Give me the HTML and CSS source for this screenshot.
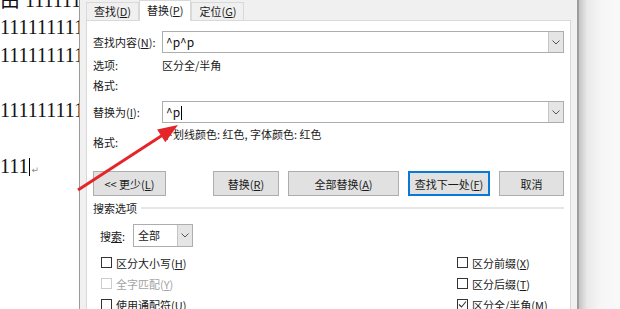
FILE: index.html
```html
<!DOCTYPE html>
<html lang="zh-CN">
<head>
    <meta charset="UTF-8">
    <meta name="viewport" content="width=device-width, initial-scale=1.0">
    <title>查找和替换</title>
    <link rel="stylesheet" href="styles.css">
</head>
<body>
    <div class="screen">
        <div class="doc">
            <p class="first">由 11111111111</p>
            <p>11111111111</p>
            <p>11111111111</p>
            <p></p>
            <p>11111111111</p>
            <p></p>
            <p>111<span class="caret"></span><span class="pilcrow">↵</span></p>
        </div>

        <div class="dialog">
            <div class="tabs">
                <div class="tab">查找(<u>D</u>)</div>
                <div class="tab active">替换(<u>P</u>)</div>
                <div class="tab">定位(<u>G</u>)</div>
            </div>

            <div class="panel">
                <div class="field">
                    <span class="field-label">查找内容(<u>N</u>):</span>
                    <div class="combo">
                        <span class="combo-text">^p^p</span>
                        <span class="combo-btn"><svg width="8" height="5" viewBox="0 0 8 5"><path d="M0.5 0.5 L4 4 L7.5 0.5" fill="none" stroke="#555" stroke-width="1"/></svg></span>
                    </div>
                </div>
                <div class="info options">
                    <span class="field-label">选项:</span>
                    <span>区分全/半角</span>
                </div>
                <div class="info">
                    <span class="field-label">格式:</span>
                </div>

                <div class="field replace">
                    <span class="field-label">替换为(<u>I</u>):</span>
                    <div class="combo">
                        <span class="combo-text">^p<span class="text-caret"></span></span>
                        <span class="combo-btn"><svg width="8" height="5" viewBox="0 0 8 5"><path d="M0.5 0.5 L4 4 L7.5 0.5" fill="none" stroke="#555" stroke-width="1"/></svg></span>
                    </div>
                </div>
                <div class="format-row">
                    <span class="field-label">格式:</span>
                    <span class="format-text">下划线颜色: 红色, 字体颜色: 红色</span>
                </div>

                <div class="buttons">
                    <div class="btn btn-less"><span>&lt;&lt; 更少(<u>L</u>)</span></div>
                    <div class="actions">
                        <div class="btn btn-replace"><span>替换(<u>R</u>)</span></div>
                        <div class="btn btn-all"><span>全部替换(<u>A</u>)</span></div>
                        <div class="btn btn-next"><span>查找下一处(<u>F</u>)</span></div>
                        <div class="btn btn-cancel"><span>取消</span></div>
                    </div>
                </div>

                <div class="group-title">搜索选项</div>

                <div class="search-row">
                    <span class="search-label">搜<u>索</u>:</span>
                    <div class="select">
                        <span class="select-text">全部</span>
                        <span class="combo-btn"><svg width="8" height="5" viewBox="0 0 8 5"><path d="M0.5 0.5 L4 4 L7.5 0.5" fill="none" stroke="#555" stroke-width="1"/></svg></span>
                    </div>
                </div>

                <div class="checks">
                    <div class="check"><span class="box"></span><span>区分大小写(<u>H</u>)</span></div>
                    <div class="check"><span class="box"></span><span>区分前缀(<u>X</u>)</span></div>
                    <div class="check disabled"><span class="box"></span><span>全字匹配(<u>Y</u>)</span></div>
                    <div class="check"><span class="box"></span><span>区分后缀(<u>T</u>)</span></div>
                    <div class="check"><span class="box"></span><span>使用通配符(<u>U</u>)</span></div>
                    <div class="check"><span class="box"><svg width="9" height="9" viewBox="0 0 9 9"><path d="M1 4.5 L3.5 7 L8 1.5" fill="none" stroke="#333" stroke-width="1.1"/></svg></span><span>区分全/半角(<u>M</u>)</span></div>
                </div>
            </div>
        </div>

        <div class="shade"></div>

        <svg class="arrow" width="620" height="309" viewBox="0 0 620 309">
            <line x1="78" y1="190" x2="162" y2="135.5" stroke="#e4262a" stroke-width="3"/>
            <polygon points="178,125 165.3,142.2 157.1,129.6" fill="#e4262a"/>
        </svg>
    </div>
</body>
</html>
```

FILE: styles.css
```css
* {
    box-sizing: border-box;
}
body {
    margin: 0;
    font-family: "Noto Sans CJK SC", sans-serif;
    font-size: 11px;
    color: #1a1a1a;
    background: #fff;
}
u {
    text-decoration-thickness: 1px;
    text-underline-offset: 1px;
}
.screen {
    position: relative;
    display: flex;
    height: 309px;
    overflow: hidden;
}

/* document behind the dialog */
.doc {
    width: 79px;
    flex: none;
    overflow: hidden;
    white-space: nowrap;
    font-family: "Liberation Serif", "Noto Sans CJK SC", serif;
    font-size: 20px;
    line-height: 27.75px;
    color: #111;
}
.doc p {
    margin: 0;
    height: 27.75px;
}
.doc .first {
    margin-top: -14px;
    height: 28px;
    line-height: 28px;
}
.caret {
    display: inline-block;
    width: 1px;
    height: 18px;
    background: #000;
    vertical-align: -3px;
}
.pilcrow {
    font-family: "DejaVu Sans", sans-serif;
    font-size: 9px;
    color: #8a8a8a;
    margin-left: 2px;
}

/* dialog */
.dialog {
    width: 500px;
    flex: none;
    display: flex;
    flex-direction: column;
    background: #f0f0f0;
    border-left: 1px solid #9b9b9b;
    border-right: 2px solid #9d9d9d;
    padding: 0 6px;
}
.tabs {
    display: flex;
    align-items: flex-end;
    height: 20px;
}
.tab {
    height: 18px;
    padding: 0 7px;
    line-height: 17px;
    border: 1px solid #d9d9d9;
    border-bottom: none;
    background: #f0f0f0;
}
.tab.active {
    height: 21px;
    line-height: 19px;
    margin-bottom: -1px;
    background: #fff;
    position: relative;
    z-index: 1;
}
.panel {
    flex: 1;
    background: #fff;
    border: 1px solid #d9d9d9;
    padding: 10px 6px 0;
}
.field {
    display: flex;
    align-items: center;
    height: 22px;
}
.field-label {
    width: 69px;
    flex: none;
}
.combo {
    flex: 1;
    display: flex;
    height: 22px;
    border: 1px solid #adadad;
    background: #fff;
}
.combo-text {
    flex: 1;
    padding-left: 3px;
    font-size: 12px;
    line-height: 19px;
    color: #111;
}
.text-caret {
    display: inline-block;
    width: 1px;
    height: 14px;
    background: #000;
    vertical-align: -3px;
    margin-left: 1px;
}
.combo-btn {
    width: 15px;
    flex: none;
    display: flex;
    align-items: center;
    justify-content: center;
    border-left: 1px solid #c4c4c4;
    background: #e5e5e5;
}
.info {
    display: flex;
    height: 20px;
    line-height: 20px;
}
.options {
    margin-top: 2px;
}
.replace {
    margin-top: 6px;
}
.format-row {
    display: flex;
    height: 30px;
    line-height: 20px;
}
.format-row .field-label {
    padding-top: 9px;
}
.format-text {
    padding-top: 1px;
}

/* buttons */
.buttons {
    display: flex;
    height: 25px;
    margin-top: 18px;
}
.btn {
    height: 25px;
    display: flex;
    align-items: center;
    justify-content: center;
    border: 1px solid #adadad;
    background: #e1e1e1;
}
.btn-less {
    width: 73px;
}
.actions {
    display: flex;
    gap: 9px;
    margin-left: auto;
}
.btn-replace {
    width: 66px;
}
.btn-all {
    width: 111px;
}
.btn-next {
    width: 82px;
    border: 2px solid #0a78d7;
}
.btn-cancel {
    width: 65px;
}

/* search options */
.group-title {
    display: flex;
    align-items: center;
    height: 16px;
    margin-top: 4px;
}
.group-title::after {
    content: "";
    flex: 1;
    height: 2px;
    margin-left: 4px;
    background: #e6e6e6;
}
.search-row {
    display: flex;
    align-items: center;
    height: 23px;
    margin-top: 8px;
    padding-left: 7px;
}
.search-label {
    width: 33px;
}
.select {
    display: flex;
    width: 60px;
    height: 23px;
    border: 1px solid #adadad;
    background: #fff;
}
.select-text {
    flex: 1;
    padding-left: 4px;
    line-height: 21px;
}
.checks {
    display: grid;
    grid-template-columns: 356px 1fr;
    grid-auto-rows: 21px;
    margin-top: 5px;
    padding-left: 8px;
}
.check {
    display: flex;
    align-items: center;
    gap: 4px;
}
.box {
    width: 11px;
    height: 11px;
    display: flex;
    align-items: center;
    justify-content: center;
    border: 1px solid #333;
    background: #fff;
}
.check.disabled {
    color: #a3a3a3;
}
.check.disabled .box {
    border-color: #cccccc;
}

.shade {
    flex: 1;
    background: linear-gradient(to right, #c4c4c4, #e9e9e9 8px, #f6f6f6 22px, #f9f9f9);
}
.arrow {
    position: absolute;
    left: 0;
    top: 0;
    pointer-events: none;
}
```
